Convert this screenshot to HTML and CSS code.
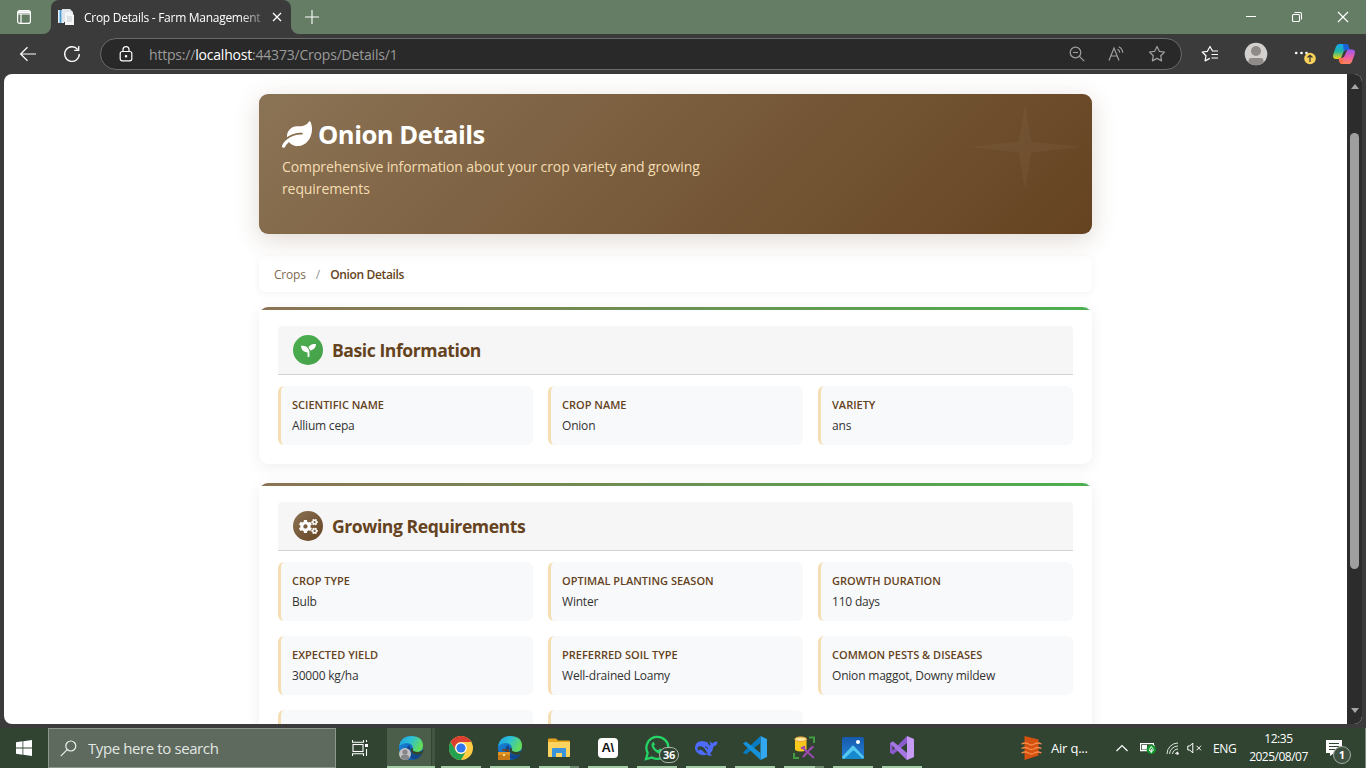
FILE: index.html
```html
<!DOCTYPE html>
<html lang="en">
<head>
<meta charset="utf-8">
<title>Crop Details - Farm Management</title>
<link rel="stylesheet" href="styles.css">
</head>
<body>
<div class="screen">
  <header class="tabstrip">
    <div class="tab-actions"><svg width="16" height="16" viewBox="0 0 16 16" fill="none" stroke="#fff" stroke-width="1.2"><rect x="1.6" y="1.6" width="12.8" height="12.8" rx="2.2"/><path d="M1.6 5h12.8M5 5v9.4"/><path d="M2 3.2h12" stroke-width="2"/></svg></div>
    <div class="tab">
      <svg width="16" height="16" viewBox="0 0 16 16"><path d="M0 1h6v13H0z" fill="#e8f3fa"/><path d="M1.500 1h2v13h-2z" fill="#4f9fd6"/><path d="M4 0h8l3 3v10H4z" fill="#dfe5ea"/><path d="M7 3h6l3 3v10H7z" fill="#f3f5f7"/><path d="M9 8h5M9 10h5M9 12h5" stroke="#b9c3cc" stroke-width=".8"/></svg>
      <span class="tab-title">Crop Details - Farm Management</span>
      <svg width="10" height="10" viewBox="0 0 10 10" stroke="#fff" stroke-width="1.300"><path d="M1 1l8 8M9 1l-8 8"/></svg>
    </div>
    <svg class="newtab" width="14" height="14" viewBox="0 0 14 14" stroke="#fff" stroke-width="1.1"><path d="M7 0v14M0 7h14"/></svg>
    <div class="winctl">
      <svg width="12" height="12" viewBox="0 0 12 12" stroke="#fff"><path d="M1 5.500h10"/></svg>
      <svg width="12" height="12" viewBox="0 0 12 12" fill="none" stroke="#fff" stroke-width="1.100"><rect x="1.500" y="3.500" width="7" height="7" rx="1"/><path d="M3.500 1.500H9a1.500 1.500 0 0 1 1.500 1.500v5.500"/></svg>
      <svg width="12" height="12" viewBox="0 0 12 12" stroke="#fff" stroke-width="1.200"><path d="M1 1l10 10M11 1L1 11"/></svg>
    </div>
  </header>

  <nav class="toolbar">
    <svg class="back" width="18" height="18" viewBox="0 0 18 18" fill="none" stroke="#fff" stroke-width="1.200"><path d="M17 9H2M8.500 2.200L1.600 9l6.900 6.800"/></svg>
    <svg class="reload" width="18" height="18" viewBox="0 0 18 18" fill="none" stroke="#fff" stroke-width="1.300"><path d="M16.300 9A7.300 7.300 0 1 1 14.700 4.500"/><path d="M15.700 1v4.400h-4.400"/></svg>
    <div class="address">
      <svg width="14" height="16" viewBox="0 0 14 16" fill="none" stroke="#fff" stroke-width="1.200"><rect x="1.200" y="5.500" width="11.600" height="9.300" rx="2"/><path d="M4 5.500V3.600a3 3 0 0 1 6 0v1.900"/><circle cx="7" cy="10.200" r=".7" fill="#fff"/></svg>
      <span class="url">https://<b>localhost</b>:44373/Crops/Details/1</span>
      <div class="address-icons">
        <svg width="16" height="16" viewBox="0 0 16 16" fill="none" stroke="#a0a0a0" stroke-width="1.200"><circle cx="6.500" cy="6.500" r="5.300"/><path d="M10.400 10.400l4.800 4.800M4 6.500h5"/></svg>
        <svg width="17" height="16" viewBox="0 0 17 16" fill="none" stroke="#a0a0a0" stroke-width="1.200"><path d="M1 14.500L6 2l5 12.500M2.800 10h6.400M9.500 3.200q2 1 2.300 3.600M10.800.8q3.500 1.600 4 6"/></svg>
        <svg width="18" height="18" viewBox="0 0 18 18" fill="none" stroke="#a0a0a0" stroke-width="1.200" stroke-linejoin="round"><path d="M9 1.500l2.300 4.800 5.200.7-3.800 3.700.9 5.200L9 13.400l-4.600 2.500.9-5.200L1.500 7l5.200-.7z"/></svg>
      </div>
    </div>
    <svg class="favs" width="18" height="18" viewBox="0 0 18 18" fill="none" stroke="#fff" stroke-width="1.200" stroke-linejoin="round"><path d="M17 6h-5.500L9 1.500 6.400 6.300 1.200 7l3.800 3.700-.9 5.200 4.700-2.500M10.500 9.500H17M10.500 13H17"/></svg>
    <svg class="avatar" width="24" height="24" viewBox="0 0 24 24"><defs><clipPath id="av"><circle cx="12" cy="12" r="11.300"/></clipPath></defs><g clip-path="url(#av)"><path d="M0 0h24v24H0z" fill="#d2d0ce"/><circle cx="12" cy="9" r="5" fill="#8f8b88"/><path d="M4.500 24v-5q0-3 3-3h9q3 0 3 3v5z" fill="#8f8b88"/></g></svg>
    <svg class="more" width="22" height="22" viewBox="0 0 22 22"><g fill="#fff"><circle cx="2.200" cy="10" r="1.300"/><circle cx="7.500" cy="10" r="1.300"/><circle cx="12.500" cy="10" r="1.300"/></g><circle cx="16" cy="15.500" r="5.800" fill="#f8d15a"/><path d="M16 19v-6.500M13.500 14.500l2.500-2.300 2.500 2.300" fill="none" stroke="#333" stroke-width="1.200"/></svg>
    <svg class="copilot" width="22" height="20" viewBox="0 0 22 20"><defs><linearGradient id="cp1" x2="0" y2="1"><stop stop-color="#16a6f5"/><stop offset=".5" stop-color="#22b8a0"/><stop offset="1" stop-color="#f5d20a"/></linearGradient><linearGradient id="cp2" x2="0" y2="1"><stop stop-color="#9a57f2"/><stop offset=".55" stop-color="#ee5fa5"/><stop offset="1" stop-color="#ff8656"/></linearGradient></defs><path d="M6 0h7q2 0 3 4l.6 2H13q-2 0-3 3l-2 5q-.600 1-2 1H3q-4 0-2.600-5L3 2.500Q4 0 6 0z" fill="url(#cp1)"/><path d="M10 0h3.500q2 0 2.700 4l.4 2H13q-1.500 0-2.200 2z" fill="#1b62d8"/><path d="M16 20H9q-2 0-3-4l-.500-2H9q2 0 3-3l2-4.500q.6-1 2-1h3q4 0 2.600 5L19 17.500Q18 20 16 20z" fill="url(#cp2)"/><path d="M5.500 14.500H9q1.500 0 2.300-2L9.500 20H9q-2.500 0-3.500-5.500z" fill="#ff7048"/></svg>
  </nav>

  <div class="viewport">
    <main class="page">
      <section class="hero">
        <svg class="hero-star" width="112" height="84" viewBox="0 0 112 84"><path d="M56 0l6.500 36.500L112 42l-49.500 5.500L56 84l-6.500-36.500L0 42l49.500-5.500z" fill="#fff" fill-opacity=".035"/></svg>
        <h1><svg width="30" height="27" viewBox="0 0 576 512" fill="#fff"><path d="M546.2 9.7c-5.600-12.500-21.600-13-28.300-1.200C486.900 62.400 431.400 96 368 96h-80C182 96 96 182 96 288c0 7 .8 13.700 1.500 20.500C161.300 262.800 253.400 224 384 224c8.800 0 16 7.200 16 16s-7.200 16-16 16C132.600 256 26 410.100 2.400 468c-6.600 16.300 1.200 34.900 17.500 41.600 16.400 6.800 35-1.100 41.800-17.300 1.500-3.600 20.900-47.900 71.900-90.600 32.400 43.900 94 85.800 174.900 77.200C465.500 467.500 576 326.700 576 154.300c0-50.200-10.800-102.200-29.800-144.600z"/></svg><span>Onion Details</span></h1>
        <p>Comprehensive information about your crop variety and growing requirements</p>
      </section>

      <div class="crumbs"><span class="crumb">Crops</span><span class="slash">/</span><span class="current">Onion Details</span></div>

      <section class="card">
        <div class="card-head">
          <span class="badge green"><svg width="15" height="15" viewBox="0 0 512 512" fill="#fff"><path d="M64 96H0c0 123.700 100.300 224 224 224v144c0 8.800 7.200 16 16 16h32c8.800 0 16-7.200 16-16V320C288 196.300 187.700 96 64 96zm384-64c-84.200 0-157.400 46.500-195.700 115.200 27.700 30.200 48.200 66.900 59 107.600C424 243.100 512 147.900 512 32h-64z"/></svg></span>
          <h2>Basic Information</h2>
        </div>
        <div class="grid">
          <div class="item"><span class="label l1">Scientific Name</span><span class="value">Allium cepa</span></div>
          <div class="item"><span class="label">Crop Name</span><span class="value">Onion</span></div>
          <div class="item"><span class="label">Variety</span><span class="value">ans</span></div>
        </div>
      </section>

      <section class="card">
        <div class="card-head">
          <span class="badge brown"><svg width="19" height="15" viewBox="0 0 640 512" fill="#fff"><defs><path id="cog" d="M512.100 191l-8.200 14.300c-3 5.300-9.400 7.500-15.100 5.400-11.800-4.400-22.600-10.700-32.100-18.600-4.600-3.800-5.800-10.500-2.800-15.700l8.200-14.300c-6.900-8-12.300-17.300-15.900-27.400h-16.500c-6 0-11.200-4.300-12.200-10.300-2-12-2.100-24.600 0-37.100 1-6 6.200-10.400 12.200-10.400h16.500c3.600-10.100 9-19.400 15.900-27.400l-8.200-14.300c-3-5.200-1.900-11.900 2.800-15.700 9.500-7.900 20.400-14.200 32.100-18.600 5.700-2.100 12.100.1 15.100 5.400l8.200 14.300c10.500-1.900 21.200-1.900 31.700 0L552 6.300c3-5.300 9.400-7.500 15.100-5.400 11.800 4.400 22.600 10.700 32.100 18.600 4.600 3.800 5.800 10.500 2.800 15.700l-8.200 14.300c6.900 8 12.300 17.300 15.900 27.400h16.500c6 0 11.200 4.300 12.200 10.300 2 12 2.100 24.600 0 37.100-1 6-6.200 10.400-12.200 10.400h-16.500c-3.600 10.100-9 19.400-15.900 27.400l8.200 14.300c3 5.200 1.900 11.900-2.800 15.700-9.500 7.900-20.400 14.200-32.100 18.600-5.700 2.100-12.100-.1-15.100-5.400l-8.200-14.300c-10.400 1.900-21.200 1.900-31.700 0zm-10.500-58.800c38.500 29.600 82.400-14.300 52.800-52.800-38.500-29.700-82.400 14.300-52.800 52.800z"/></defs><use href="#cog"/><use href="#cog" y="300"/><path d="M386.300 286.100l33.700 16.800c10.100 5.800 14.500 18.100 10.500 29.100-8.900 24.200-26.400 46.400-42.600 65.800-7.400 8.900-20.200 11.100-30.300 5.300l-29.100-16.800c-16 13.700-34.600 24.600-54.900 31.700v33.600c0 11.600-8.300 21.600-19.700 23.600-24.600 4.200-50.400 4.400-75.900 0-11.500-2-20-11.900-20-23.600V418c-20.300-7.200-38.900-18-54.900-31.700L74 403c-10 5.800-22.900 3.600-30.300-5.300-16.200-19.400-33.300-41.600-42.200-65.700-4-10.900.4-23.200 10.500-29.100l33.300-16.800c-3.900-20.900-3.900-42.400 0-63.400L12 205.800c-10.100-5.800-14.600-18.100-10.500-29 8.900-24.200 26-46.400 42.200-65.800 7.400-8.900 20.200-11.100 30.300-5.300l29.100 16.800c16-13.700 34.600-24.600 54.900-31.700V57.100c0-11.500 8.200-21.500 19.600-23.500 24.600-4.200 50.500-4.400 76-.1 11.500 2 20 11.900 20 23.600v33.600c20.300 7.200 38.900 18 54.900 31.700l29.100-16.800c10-5.800 22.900-3.600 30.300 5.300 16.200 19.400 33.200 41.600 42.100 65.800 4 10.900.1 23.200-10 29.100l-33.700 16.800c3.900 21 3.900 42.500 0 63.500zm-117.600 21.100c59.200-77-28.700-164.900-105.700-105.700-59.200 77 28.700 164.900 105.700 105.700z"/></svg></span>
          <h2>Growing Requirements</h2>
        </div>
        <div class="grid">
          <div class="item"><span class="label">Crop Type</span><span class="value">Bulb</span></div>
          <div class="item"><span class="label">Optimal Planting Season</span><span class="value">Winter</span></div>
          <div class="item"><span class="label">Growth Duration</span><span class="value">110 days</span></div>
          <div class="item"><span class="label">Expected Yield</span><span class="value">30000 kg/ha</span></div>
          <div class="item"><span class="label">Preferred Soil Type</span><span class="value">Well-drained Loamy</span></div>
          <div class="item"><span class="label">Common Pests &amp; Diseases</span><span class="value">Onion maggot, Downy mildew</span></div>
          <div class="item"></div>
          <div class="item"></div>
        </div>
      </section>
    </main>
    <div class="scrollbar">
      <i class="up"></i><i class="thumb"></i><i class="down"></i>
    </div>
  </div>

  <footer class="taskbar">
    <div class="start"><svg width="16" height="16" viewBox="0 0 16 16" fill="#fff"><path d="M0 2.200l6.500-.9v6.300H0zM7.300 1.200L16 0v7.600H7.300zM0 8.400h6.500v6.300L0 13.800zM7.300 8.400H16V16l-8.700-1.200z"/></svg></div>
    <div class="search"><svg width="17" height="17" viewBox="0 0 17 17" fill="none" stroke="#eef2ee" stroke-width="1.200"><circle cx="10.800" cy="6" r="5"/><path d="M7.200 9.700L.8 16.200"/></svg><span>Type here to search</span></div>
    <div class="taskview"><svg width="17" height="16" viewBox="0 0 17 16" fill="none" stroke="#fff" stroke-width="1.100"><rect x="1" y="4.500" width="10" height="7"/><path d="M.5 0v2.200h11V0M.5 16v-2.200h11V16M14.500 0v2M14.500 9v7"/><path d="M13 4h3v3h-3z" fill="#fff" stroke="none"/></svg></div>
    <div class="apps">
      <div class="app active"><svg width="26" height="26" viewBox="0 0 26 26"><defs><linearGradient id="e1" x2="1" y2=".4"><stop stop-color="#1f9fe0"/><stop offset=".5" stop-color="#2cc0d4"/><stop offset="1" stop-color="#63dc5c"/></linearGradient><linearGradient id="e2" x2="1" y2="1"><stop stop-color="#1a8ade"/><stop offset="1" stop-color="#0c4fa0"/></linearGradient><g id="edge"><circle cx="13" cy="13" r="12" fill="url(#e2)"/><path d="M1.200 11Q3 1 13 1q12 0 12 10 0 6-7 6-5 0-3.500-3 1-3-2-5Q7 6 1.200 11z" fill="url(#e1)"/><path d="M11 10q-4 3-2 8 2 5 8 6.300 5-1.300 7-5.300-7 3-11-1-2-2-.5-4.500z" fill="#10458f"/><path d="M13.500 13q-2 3 1 5.500 4 2.500 9.500.500l2-4q-3 2.500-7 2-5.500-.5-3.700-3.500z" fill="#304431"/></g></defs><use href="#edge"/><circle cx="7" cy="19" r="6" fill="#c3c3c5"/><circle cx="7" cy="17" r="2.600" fill="#86868a"/><path d="M3 22.500q0-3 4-3t4 3-4 2.300-4-2.300z" fill="#86868a"/></svg></div>
      <div class="app"><svg width="24" height="24" viewBox="0 0 24 24"><circle cx="12" cy="12" r="12" fill="#fc4"/><path d="M1.600 6A12 12 0 0 1 22.400 6H12a6 6 0 0 0-5.200 9z" fill="#dc3e31"/><path d="M1.600 6A12 12 0 0 0 12 24l5.200-9A6 6 0 0 1 6.800 15z" fill="#23a352"/><circle cx="12" cy="12" r="5.800" fill="#fff"/><circle cx="12" cy="12" r="4.600" fill="#3277ec"/></svg></div>
      <div class="app"><svg width="26" height="26" viewBox="0 0 26 26"><use href="#edge"/><path d="M5 15h6v3" fill="none" stroke="#74410f" stroke-width="1.500"/><path d="M1 17h12v8H1z" fill="#c77a16"/><path d="M1 17h12v3H1z" fill="#e29221"/><path d="M6 19h2v2H6z" fill="#ffe28a"/></svg></div>
      <div class="app split"><svg width="22" height="20" viewBox="0 0 22 20"><path d="M0 1.500Q0 .5 1 .5h7l2 2H21q1 0 1 1V18H0z" fill="#e8a51c"/><path d="M0 4h22v14q0 1-1 1H1q-1 0-1-1z" fill="#fcd45f"/><path d="M4 11q0-1 1-1h12q1 0 1 1v8h-4v-4H8v4H4z" fill="#3a94dc"/></svg></div>
      <div class="app"><div class="ai">A\</div></div>
      <div class="app"><svg width="26" height="26" viewBox="0 0 26 26"><path d="M2 24l1.700-6A11 11 0 1 1 8 22.400z" fill="none" stroke="#25d366" stroke-width="2.300"/><path d="M9 7q-2 1.500-1.500 4 1.500 5 7 7.500 3 1 4.500-2v-1.500l-3-1.500-1.800 1.800q-3-1-4.500-4.300l1.300-1.500L9.800 7z" fill="#25d366"/></svg><b class="count">36</b></div>
      <div class="app"><svg width="24" height="20" viewBox="0 0 24 20"><path d="M1 9Q2 3 8 3l5 1 3 4q1-2-.5-5l3 2.500Q19 4 23.500 3.500q0 4-4 5Q19 13 16 15.500l2 2q-3 1-5-1-6 2-10-2Q.5 12 1 9z" fill="#4d6bfe"/><path d="M3.500 9q4-2 7 1.500l3.500 5.300q-4-.5-5.500-3Q6 10 4 13z" fill="#304431"/><path d="M11 9q2-.5 3 2" stroke="#304431" fill="none"/></svg></div>
      <div class="app"><svg width="24" height="24" viewBox="0 0 24 24"><path d="M17.500 0L24 3v18l-6.500 3z" fill="#32a7f0"/><path d="M17.500 0v7L3 18.500l-3-2z" fill="#087bc1"/><path d="M0 7.500l3-2L17.500 17v7z" fill="#1592da"/></svg></div>
      <div class="app split"><svg width="24" height="24" viewBox="0 0 24 24"><path d="M17 1.500h5V7M2 17v5h5" fill="none" stroke="#439b40" stroke-width="2"/><path d="M3 3v11q6 3 11.500 0V3z" fill="#fac81d"/><ellipse cx="8.700" cy="3.200" rx="5.800" ry="2.300" fill="#ffe79b" stroke="#e9a22f"/><path d="M11 12l11 10M20 11L11 21M9 12.500l4-2M18 13.500l3.500-3" stroke="#9b4aae" stroke-width="2"/></svg></div>
      <div class="app"><svg width="22" height="22" viewBox="0 0 22 22"><defs><linearGradient id="ph" x2="0" y2="1"><stop stop-color="#1559ac"/><stop offset="1" stop-color="#2582d8"/></linearGradient></defs><rect width="22" height="22" rx="2" fill="url(#ph)"/><path d="M0 20L10 9q1-1 2 0l10 11q0 2-2 2H2q-2 0-2-2z" fill="#55c8ef"/><path d="M2 22l8.500-8q1-1 2 0l8.500 8z" fill="#1689cf"/><circle cx="16" cy="5" r="2" fill="#fff"/></svg></div>
      <div class="app"><svg width="24" height="24" viewBox="0 0 24 24"><path d="M17 0l7 3v18l-7 3z" fill="#c69af5"/><path d="M17 0v7L3 18.500l-3-1.800V7.300l3-1.800L17 17v7L2.500 9.500v5z" fill="#8c5bd0"/><path d="M0 7.300l3-1.800L17 17v7z" fill="#a476e2"/></svg></div>
    </div>
    <div class="tray">
      <svg class="air" width="21" height="24" viewBox="0 0 21 24"><path d="M3.500 0l14 3.500v16L3.500 24z" fill="#d4510f"/><path d="M.5 8q4-2 7 0t6 0 7 0M.5 12.500q4-2 7 0t6 0 7 0M.5 17q4-2 7 0t6 0 7 0" stroke="#f78c4c" fill="none" stroke-width="1.300"/></svg>
      <span class="air-text">Air q...</span>
      <svg class="chev" width="12" height="8" viewBox="0 0 12 8" fill="none" stroke="#fff" stroke-width="1.200"><path d="M.5 7L6 1.500 11.500 7"/></svg>
      <svg class="bat" width="17" height="14" viewBox="0 0 17 14"><path d="M.6 2.600h12.800v7H.6z" fill="none" stroke="#fff" stroke-width="1.200"/><path d="M2 4h5v4.500H2zM14 4.500h1v3h-1z" fill="#fff"/><circle cx="11.300" cy="8.500" r="4.700" fill="#12942a"/><path d="M11.300 5.500l-2 3q0 2 2 2t2-2zM11.300 8v4" fill="none" stroke="#fff"/></svg>
      <svg class="wifi" width="13" height="13" viewBox="0 0 13 13" fill="none" stroke="#dfe5df"><path d="M1 12A11 11 0 0 1 12 1M3.500 12A8.500 8.500 0 0 1 12 4M6.500 12A5.500 5.500 0 0 1 12 7M9.300 12A3 3 0 0 1 12 10"/><circle cx="11.500" cy="11.500" r="1" fill="#fff"/></svg>
      <svg class="vol" width="15" height="12" viewBox="0 0 15 12" fill="none" stroke="#fff"><path d="M.8 4v4h2l3 3V1l-3 3zM9.500 3.800l4.500 4.500M14 3.800L9.500 8.300"/></svg>
      <span class="lang">ENG</span>
      <div class="clock"><span>12:35</span><span class="date">2025/08/07</span></div>
      <div class="notify"><svg width="16" height="16" viewBox="0 0 16 16"><path d="M0 0h16v13H8l-4 3v-3H0z" fill="#fff"/><path d="M3 3.500h10M3 6.500h10M3 9.500h7" stroke="#304431"/></svg><b>1</b></div>
    </div>
  </footer>
</div>
</body>
</html>
```
FILE: styles.css
```css
* { box-sizing: border-box; }
body { margin: 0; font-family: "Open Sans", "Noto Sans", sans-serif; }
svg { display: block; flex: none; }
.screen { width: 1366px; height: 768px; overflow: hidden; display: flex; flex-direction: column; background: #3b3b3b; }

/* Tab strip */
.tabstrip { height: 34px; flex: none; background: #647d64; display: flex; align-items: stretch; }
.tab-actions { width: 51px; padding: 9px 0 0 16px; border-bottom-right-radius: 8px; background: #647d64; }
.tabstrip { background: linear-gradient(#3b3b3b, #3b3b3b) 43px 26px / 256px 8px no-repeat, #647d64; }
.tab { width: 240px; background: #3b3b3b; border-radius: 8px 8px 0 0; display: flex; align-items: center; padding-left: 7px; }
.tab-title { width: 177px; margin: 0 11px 0 10px; font-size: 12px; letter-spacing: -.28px; white-space: nowrap; overflow: hidden; color: #fff; -webkit-mask-image: linear-gradient(90deg, #000 88%, rgba(0,0,0,.3)); mask-image: linear-gradient(90deg, #000 88%, rgba(0,0,0,.3)); }
.newtab { box-sizing: content-box; padding: 10px 0 10px 14px; background: #647d64; border-bottom-left-radius: 8px; }
.winctl { flex: 1; display: flex; justify-content: flex-end; gap: 34px; align-items: flex-start; padding: 11px 17px 0 0; background: #647d64; }

/* Toolbar */
.toolbar { height: 40px; flex: none; display: flex; align-items: center; padding-left: 19px; }
.reload { margin-left: 26px; }
.address { margin-left: 19px; width: 1082px; height: 32px; border: 1px solid #6b6b6b; border-radius: 16px; background: #292929; display: flex; align-items: center; padding-left: 18px; }
.url { margin-left: 16px; font-size: 14px; letter-spacing: -.2px; color: #9b9b9b; white-space: nowrap; }
.url b { font-weight: 400; color: #fff; }
.address-icons { margin-left: auto; padding-right: 15px; display: flex; align-items: center; gap: 23px; }
.favs { margin-left: 19px; }
.avatar { margin-left: 25px; }
.more { margin-left: 26px; }
.copilot { margin-left: 17px; }

/* Viewport */
.viewport { height: 650px; flex: none; margin: 0 4px; display: flex; border-radius: 8px; overflow: hidden; background: #fff; }
.page { width: 1343px; padding: 20px 255px 0; display: flex; flex-direction: column; }
.scrollbar { width: 15px; background: #2c2c2c; display: flex; flex-direction: column; align-items: center; padding-top: 10px; }
.up { border: 4px solid transparent; border-top: 0; border-bottom: 5px solid #a6a6a6; }
.thumb { width: 9px; height: 436px; margin: 44px 0 139px; border-radius: 5px; background: #9f9f9f; }
.down { border: 4px solid transparent; border-bottom: 0; border-top: 5px solid #a6a6a6; }

.hero { position: relative; flex: none; height: 140px; border-radius: 9px; background: linear-gradient(135deg, #8b7355, #654321); box-shadow: 0 6px 24px rgba(101,67,33,.2); padding: 24px 23px; }
.hero-star { position: absolute; right: 11px; top: 11px; }
.hero h1 { margin: 0; height: 32px; display: flex; align-items: center; gap: 6px; color: #fff; font-size: 25.600px; font-weight: 700; letter-spacing: -.5px; white-space: nowrap; }
.hero p { margin: 6px 0 0; width: 450px; color: #f5deb3; font-size: 14px; line-height: 22px; letter-spacing: -.1px; }

.crumbs { flex: none; margin-top: 22px; height: 36px; border-radius: 6px; background: #fff; box-shadow: 0 2px 8px rgba(0,0,0,.05); display: flex; align-items: center; padding-left: 15px; font-size: 12px; font-weight: 500; }
.crumb { color: #7f6b50; letter-spacing: -.2px; }
.slash { margin: 0 10px; color: #8d9196; }
.current { color: #654321; font-weight: 600; letter-spacing: -.35px; }

.card { flex: none; position: relative; margin-top: 15px; padding: 19px; border-radius: 9px; background: #fff; box-shadow: 0 3px 15px rgba(0,0,0,.07); overflow: hidden; }
.card + .card { margin-top: 19px; }
.card::before { content: ""; position: absolute; left: 0; right: 0; top: 0; height: 3px; background: linear-gradient(90deg, #8b7355, #4caf50); }
.card-head { height: 49px; display: flex; align-items: center; gap: 9px; padding-left: 15px; background: #f6f6f6; border-bottom: 1px solid #d3d3d3; border-radius: 4px 4px 0 0; }
.badge { width: 30px; height: 30px; border-radius: 50%; display: flex; align-items: center; justify-content: center; }
.green { background: linear-gradient(135deg, #4caf50, #45a049); }
.brown { background: linear-gradient(135deg, #8b7355, #654321); }
.card-head h2 { margin: 0; font-size: 17.600px; font-weight: 700; color: #654321; letter-spacing: -.45px; }
.grid { margin-top: 11px; display: grid; grid-template-columns: repeat(3, 1fr); gap: 15px; }
.item { height: 59px; border-left: 3px solid #f5deb3; border-radius: 6px; background: #f8f9fb; padding: 9px 11px; display: flex; flex-direction: column; white-space: nowrap; }
.label { font-size: 11px; line-height: 20px; font-weight: 600; text-transform: uppercase; color: #654321; letter-spacing: 0; }
.value { font-size: 12px; line-height: 21px; color: #333; letter-spacing: -.2px; }

/* Taskbar */
.taskbar { margin-top: 4px; height: 40px; flex: none; background: #304431; display: flex; color: #fff; }
.start { width: 48px; padding: 12px 16px; }
.search { width: 288px; border: 1px solid #8a988b; background: #5d6a5d; display: flex; align-items: center; padding-left: 11px; gap: 11px; color: #e3e7e3; font-size: 15px; letter-spacing: -.4px; }
.taskview { width: 51px; padding: 12px 0 0 16px; }
.apps { display: flex; }
.app { position: relative; width: 49px; height: 40px; display: flex; align-items: center; justify-content: center; background: linear-gradient(#a5cba6, #a5cba6) 50% 100% / 40px 2px no-repeat; }
.active { width: 48px; background: linear-gradient(#a5cba6, #a5cba6) 0 100% / 48px 2px no-repeat, linear-gradient(90deg, #4a5e4a 44px, #304431 44px 45px, #425542 45px); }
.apps .app:nth-child(2) { margin-left: 1px; }
.split { background: linear-gradient(90deg, #a5cba6 31px, #6d8a6e 31px) 50% 100% / 40px 2px no-repeat; }
.ai { width: 20px; height: 20px; border-radius: 4px; background: #fff; color: #111; font: 700 13px/20px "Liberation Sans", sans-serif; letter-spacing: -.5px; text-align: center; }
.count { position: absolute; left: 27px; top: 19px; width: 20px; height: 16px; border: 1px solid #a9b4a9; border-radius: 8px; background: #304431; font-size: 11px; line-height: 14px; text-align: center; letter-spacing: -.3px; }
.tray { margin-left: auto; display: flex; align-items: center; font-size: 12px; white-space: nowrap; }
.air-text { width: 41px; margin: 0 24px 0 9px; font-size: 13px; letter-spacing: -.2px; }
.bat { margin-left: 12px; }
.wifi { margin-left: 9px; }
.vol { margin-left: 8px; }
.lang { width: 24px; margin-left: 11px; letter-spacing: -.4px; }
.clock { width: 59px; margin-left: 12px; display: flex; flex-direction: column; align-items: center; line-height: 18px; letter-spacing: -.4px; }
.date { letter-spacing: -.5px; }
.notify { position: relative; width: 40px; height: 40px; margin-left: 18px; padding-top: 12px; border-right: 1px solid #7d8a7d; }
.notify b { position: absolute; left: 7px; top: 18px; width: 18px; height: 18px; border: 1px solid #a3ada3; border-radius: 50%; background: #3f5140; font-size: 11px; line-height: 16px; text-align: center; }
```
